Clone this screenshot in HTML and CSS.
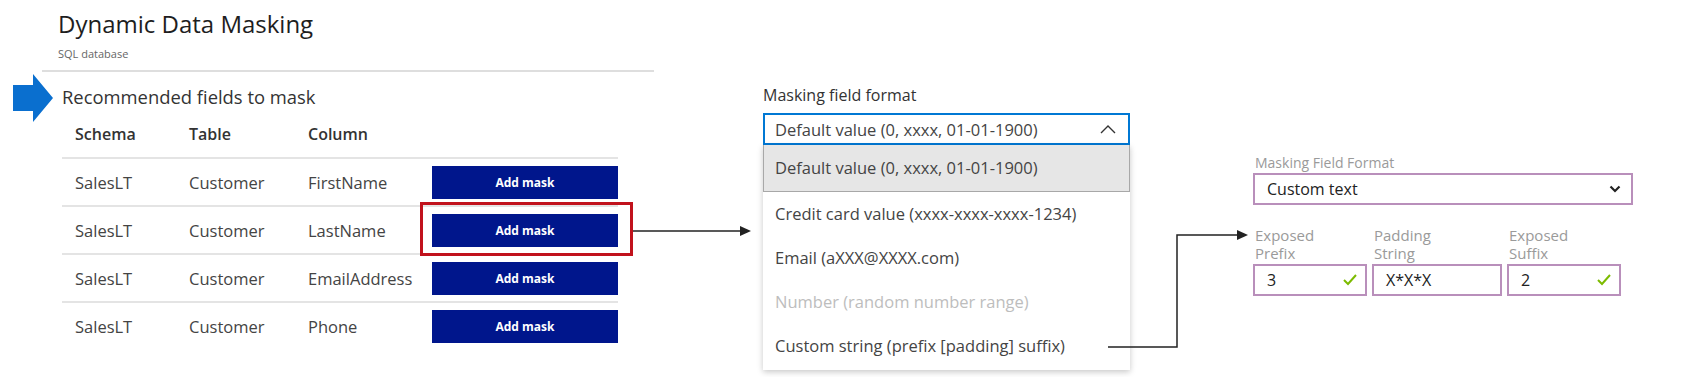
FILE: index.html
```html
<!DOCTYPE html>
<html lang="en">
<head>
  <meta charset="UTF-8" />
  <title>Dynamic Data Masking</title>
  <link rel="stylesheet" href="styles.css">
</head>
<body>
  <div class="canvas">

    <div class="masking">
      <div class="head">
        <h1>Dynamic Data Masking</h1>
        <div class="sub">SQL database</div>
      </div>

      <div class="section">
        <svg class="pointer" width="40" height="48" viewBox="0 0 40 48">
          <polygon points="0,11 20,11 20,0 40,24 20,48 20,37 0,37" fill="#0a6fcf" />
        </svg>
        <span>Recommended fields to mask</span>
      </div>

      <div class="fields">
        <div class="row head-row">
          <div>Schema</div><div>Table</div><div>Column</div><div></div>
        </div>
        <div class="row">
          <div>SalesLT</div><div>Customer</div><div>FirstName</div>
          <div><button class="add">Add mask</button></div>
        </div>
        <div class="row">
          <div>SalesLT</div><div>Customer</div><div>LastName</div>
          <div><button class="add picked">Add mask</button></div>
        </div>
        <div class="row">
          <div>SalesLT</div><div>Customer</div><div>EmailAddress</div>
          <div><button class="add">Add mask</button></div>
        </div>
        <div class="row">
          <div>SalesLT</div><div>Customer</div><div>Phone</div>
          <div><button class="add">Add mask</button></div>
        </div>
      </div>
    </div>

    <div class="format">
      <div class="label">Masking field format</div>
      <div class="select open">
        <span>Default value (0, xxxx, 01-01-1900)</span>
        <svg width="16" height="10" viewBox="0 0 16 10">
          <polyline points="1,9 8,2 15,9" fill="none" stroke="#333" stroke-width="1.4" />
        </svg>
      </div>
      <ul class="options">
        <li class="current">Default value (0, xxxx, 01-01-1900)</li>
        <li>Credit card value (xxxx-xxxx-xxxx-1234)</li>
        <li>Email (aXXX@XXXX.com)</li>
        <li class="disabled">Number (random number range)</li>
        <li>Custom string (prefix [padding] suffix)</li>
      </ul>
    </div>

    <div class="custom">
      <div class="small-label">Masking Field Format</div>
      <div class="select purple">
        <span>Custom text</span>
        <svg width="12" height="8" viewBox="0 0 12 8">
          <polyline points="1.5,1.5 6,6 10.5,1.5" fill="none" stroke="#222" stroke-width="2.2" />
        </svg>
      </div>
      <div class="parts">
        <div class="part first">
          <div class="small-label">Exposed<br>Prefix</div>
          <div class="box">
            <span>3</span>
            <svg width="14" height="12" viewBox="0 0 14 12"><polyline points="1,6 5,10 13,1" fill="none" stroke="#7cbb00" stroke-width="2" /></svg>
          </div>
        </div>
        <div class="part middle">
          <div class="small-label">Padding<br>String</div>
          <div class="box"><span>X*X*X</span></div>
        </div>
        <div class="part last">
          <div class="small-label">Exposed<br>Suffix</div>
          <div class="box">
            <span>2</span>
            <svg width="14" height="12" viewBox="0 0 14 12"><polyline points="1,6 5,10 13,1" fill="none" stroke="#7cbb00" stroke-width="2" /></svg>
          </div>
        </div>
      </div>
    </div>

    <!-- connectors between the three steps -->
    <svg class="links" width="1700" height="377" viewBox="0 0 1700 377">
      <g stroke="#222" stroke-width="1.5" fill="none">
        <line x1="633" y1="231" x2="741" y2="231" />
        <polyline points="1108,347 1177,347 1177,235 1238,235" />
      </g>
      <g fill="#222">
        <polygon points="740,226 751,231 740,236" />
        <polygon points="1237,230 1248,235 1237,240" />
      </g>
    </svg>

  </div>
</body>
</html>
```

FILE: styles.css
```css
body {
  margin: 0;
  background: #fff;
  font-family: "Open Sans", "Noto Sans", sans-serif;
  color: #333;
}
.canvas {
  position: relative;
  display: flex;
  width: 1700px;
  height: 377px;
  overflow: hidden;
}

/* left: recommended fields */
.masking {
  width: 654px;
}
.head {
  margin-left: 42px;
  padding: 8px 0 9px 16px;
  border-bottom: 2px solid #dedede;
}
h1 {
  margin: 0;
  font-size: 24px;
  line-height: 31px;
  font-weight: 400;
  color: #1e1e1e;
}
.sub {
  margin-top: 7px;
  font-size: 11px;
  line-height: 15px;
  color: #666;
}
.section {
  display: flex;
  align-items: center;
  gap: 9px;
  margin: 2px 0 0 13px;
  font-size: 18.4px;
  color: #333;
}
.section span {
  margin-bottom: 4px;
}
.fields {
  margin-left: 62px;
  width: 556px;
}
.row {
  display: grid;
  grid-template-columns: 114px 119px 137px 186px;
  align-items: center;
  height: 46px;
  border-top: 2px solid #e4e4e4;
  font-size: 16.5px;
  color: #444;
}
.row > div {
  padding-left: 13px;
}
.row > div:last-child {
  padding-left: 0;
}
.head-row {
  height: 35px;
  border-top: none;
  align-items: start;
  padding-top: 1px;
  box-sizing: border-box;
  font-size: 16px;
  font-weight: 600;
  color: #333;
}
.add {
  position: relative;
  display: block;
  width: 186px;
  height: 33px;
  border: none;
  background: #00168c;
  color: #fff;
  font-family: "Open Sans", sans-serif;
  font-size: 12px;
  font-weight: 700;
}
.add.picked::after {
  content: "";
  position: absolute;
  left: -12px;
  top: -12px;
  right: -15px;
  bottom: -9px;
  border: 3px solid #c1121c;
}

/* middle: format dropdown */
.format {
  width: 367px;
  margin-left: 109px;
  padding-top: 84px;
}
.label {
  font-size: 16px;
  line-height: 22px;
  color: #333;
}
.select {
  display: flex;
  align-items: center;
  justify-content: space-between;
  box-sizing: border-box;
  height: 32px;
  padding: 0 12px 0 10px;
  font-size: 16.5px;
}
.select.open {
  margin-top: 7px;
  border: 2px solid #0078d4;
  color: #444;
}
.options {
  list-style: none;
  margin: 0;
  padding: 0 0 2px;
  background: #fff;
  box-shadow: 0 2px 6px rgba(0,0,0,0.22);
  font-size: 16.5px;
  color: #444;
}
.options li {
  height: 44px;
  line-height: 44px;
  padding-left: 12px;
}
.options li.current {
  height: 46px;
  line-height: 46px;
  background: #e6e6e6;
  border: 1px solid #a8a8a8;
  border-top: none;
  padding-left: 11px;
}
.options li.disabled {
  color: #bdbdbd;
}

/* right: custom string fields */
.custom {
  width: 380px;
  margin-left: 123px;
  padding-top: 154px;
}
.small-label {
  font-size: 14px;
  line-height: 17px;
  color: #9a9a9a;
  padding-left: 2px;
}
.select.purple {
  margin-top: 2px;
  border: 2px solid #b98fbb;
  padding: 0 10px 0 12px;
  font-size: 16px;
  color: #222;
}
.parts {
  display: flex;
  gap: 5px;
  margin-top: 21px;
}
.part .small-label {
  font-size: 15px;
  line-height: 18px;
}
.part.first, .part.last {
  width: 114px;
}
.part.middle {
  width: 130px;
}
.box {
  display: flex;
  align-items: center;
  justify-content: space-between;
  box-sizing: border-box;
  height: 32px;
  margin-top: 2px;
  padding: 0 8px 0 12px;
  border: 2px solid #b98fbb;
  font-size: 16px;
  color: #222;
}

.links {
  position: absolute;
  left: 0;
  top: 0;
  pointer-events: none;
}
```
